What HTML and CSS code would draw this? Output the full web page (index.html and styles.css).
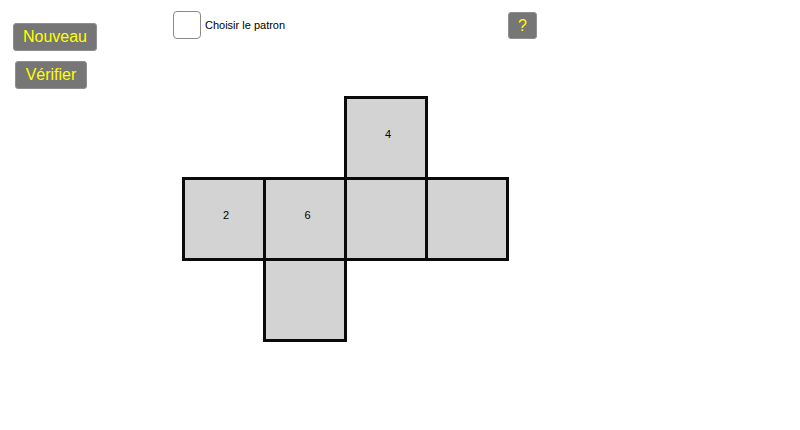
FILE: index.html
```html
<!DOCTYPE html>
<html lang="fr">
<head>
<meta charset="utf-8">
<title>Patron du cube</title>
<link rel="stylesheet" href="styles.css">
</head>
<body>
<div class="app">
  <div class="toolbar">
    <div class="tools">
      <button class="btn btn-new">Nouveau</button>
      <button class="btn btn-check">Vérifier</button>
    </div>
    <label class="choice">
      <span class="box"></span>
      <span class="label">Choisir le patron</span>
    </label>
    <button class="btn btn-help">?</button>
  </div>
  <svg class="net" width="340" height="260" viewBox="0 0 340 260">
    <g class="faces">
      <rect x="169.5" y="7.5" width="81" height="81"/>
      <rect x="7.5" y="88.5" width="81" height="81"/>
      <rect x="88.5" y="88.5" width="81" height="81"/>
      <rect x="169.5" y="88.5" width="81" height="81"/>
      <rect x="250.5" y="88.5" width="81" height="81"/>
      <rect x="88.5" y="169.5" width="81" height="81"/>
    </g>
    <g class="nums">
      <text x="212" y="48">4</text>
      <text x="50" y="129">2</text>
      <text x="131.5" y="129">6</text>
    </g>
  </svg>
</div>
</body>
</html>
```
FILE: styles.css
```css
html, body {
  margin: 0;
  padding: 0;
  background: #ffffff;
  font-family: "Liberation Sans", Arial, sans-serif;
}

.app {
  width: 800px;
  height: 430px;
  overflow: hidden;
}

.toolbar {
  display: flex;
  align-items: flex-start;
  height: 90px;
}

.tools {
  display: flex;
  flex-direction: column;
  align-items: flex-start;
  gap: 10px;
  padding: 23px 0 0 13px;
  width: 84px;
  flex: 0 0 auto;
}

.btn {
  box-sizing: border-box;
  height: 28px;
  padding: 0;
  background: #767676;
  border: 1px solid #8e8e8e;
  border-radius: 3px;
  color: #ffff00;
  font-family: "Liberation Sans", Arial, sans-serif;
  font-size: 16px;
  line-height: 26px;
  text-align: center;
  cursor: pointer;
}

.btn-new {
  width: 84px;
}

.btn-check {
  width: 72px;
  margin-left: 2px;
}

.choice {
  display: flex;
  align-items: center;
  gap: 4px;
  margin: 11px 0 0 76px;
  width: 335px;
  flex: 0 0 auto;
}

.box {
  box-sizing: border-box;
  width: 28px;
  height: 28px;
  border: 1.5px solid #8a8a8a;
  border-radius: 4px;
  background: #ffffff;
}

.label {
  font-size: 11px;
  color: #000000;
}

.btn-help {
  width: 29px;
  height: 27px;
  margin-top: 12px;
  line-height: 25px;
}

.net {
  display: block;
  margin-left: 176px;
}

.faces rect {
  fill: #d3d3d3;
  stroke: #0a0a0a;
  stroke-width: 3;
}

.nums text {
  font-family: "Liberation Sans", Arial, sans-serif;
  font-size: 11px;
  fill: #000000;
  text-anchor: middle;
}
```
